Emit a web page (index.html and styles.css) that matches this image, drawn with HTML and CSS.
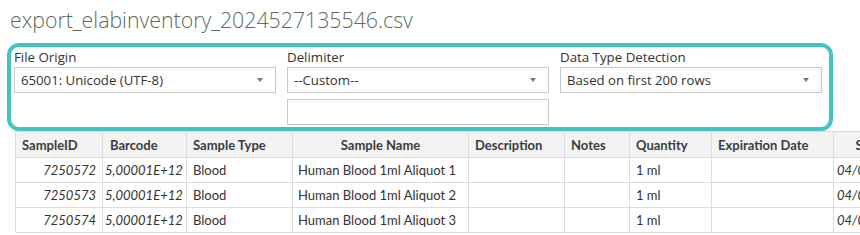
FILE: index.html
```html
<!DOCTYPE html>
<html>
<head>
<meta charset="utf-8">
<link rel="stylesheet" href="styles.css">
</head>
<body>
<div class="page">
  <div class="title">export_elabinventory_2024527135546.csv</div>
  <div class="settings">
    <div class="field">
      <div class="label">File Origin</div>
      <div class="select"><span>65001: Unicode (UTF-8)</span><span class="arrow"></span></div>
    </div>
    <div class="field">
      <div class="label">Delimiter</div>
      <div class="select"><span>--Custom--</span><span class="arrow"></span></div>
      <div class="input"></div>
    </div>
    <div class="field">
      <div class="label">Data Type Detection</div>
      <div class="select"><span>Based on first 200 rows</span><span class="arrow"></span></div>
    </div>
  </div>
  <div class="tablewrap">
    <table class="grid">
      <colgroup>
        <col class="c1"><col class="c2"><col class="c3"><col class="c4"><col class="c5"><col class="c6"><col class="c7"><col class="c8"><col class="c9">
      </colgroup>
      <thead>
        <tr>
          <th class="h-id">SampleID</th>
          <th class="h-bc">Barcode</th>
          <th>Sample Type</th>
          <th class="h-center">Sample Name</th>
          <th>Description</th>
          <th>Notes</th>
          <th>Quantity</th>
          <th>Expiration Date</th>
          <th class="h-center">Storage</th>
        </tr>
      </thead>
      <tbody>
        <tr><td class="num">7250572</td><td class="bc">5,00001E+12</td><td>Blood</td><td class="nm">Human Blood 1ml Aliquot 1</td><td></td><td></td><td>1 ml</td><td></td><td class="dt">04/05/2024</td></tr>
        <tr><td class="num">7250573</td><td class="bc">5,00001E+12</td><td>Blood</td><td class="nm">Human Blood 1ml Aliquot 2</td><td></td><td></td><td>1 ml</td><td></td><td class="dt">04/05/2024</td></tr>
        <tr><td class="num">7250574</td><td class="bc">5,00001E+12</td><td>Blood</td><td class="nm">Human Blood 1ml Aliquot 3</td><td></td><td></td><td>1 ml</td><td></td><td class="dt">04/05/2024</td></tr>
      </tbody>
    </table>
  </div>
  <div class="highlight"></div>
</div>
</body>
</html>
```
FILE: styles.css
```css
html, body {
  margin: 0;
  padding: 0;
  background: #ffffff;
}
.page {
  position: relative;
  width: 860px;
  height: 235px;
  overflow: hidden;
}
.title {
  padding-left: 10px;
  height: 40px;
  line-height: 40px;
  font-family: "Open Sans", sans-serif;
  font-weight: 300;
  font-size: 21.3px;
  color: #5b6b60;
  white-space: nowrap;
}
.settings {
  margin-top: 8px;
  padding-left: 14px;
  display: flex;
  gap: 11px;
}
.field {
  width: 262px;
  display: flex;
  flex-direction: column;
}
.label {
  height: 19px;
  line-height: 19px;
  font-family: "Open Sans", sans-serif;
  font-size: 13.3px;
  color: #333333;
  white-space: nowrap;
}
.select, .input {
  box-sizing: border-box;
  height: 26px;
  border: 1px solid #c8c8c8;
  background: #ffffff;
}
.select {
  display: flex;
  align-items: center;
  justify-content: space-between;
  padding: 0 12px 0 6px;
  font-family: "Open Sans", sans-serif;
  font-size: 13.2px;
  color: #333333;
  white-space: nowrap;
}
.arrow {
  width: 0;
  height: 0;
  border-left: 3px solid transparent;
  border-right: 3px solid transparent;
  border-top: 4px solid #777777;
}
.input {
  margin-top: 6px;
}
.tablewrap {
  margin-top: 6px;
  padding-left: 15px;
}
.grid {
  border-collapse: collapse;
  table-layout: fixed;
  width: 906px;
  font-family: Lato, sans-serif;
  font-size: 13px;
  color: #333333;
}
.c1 { width: 87px; }
.c2 { width: 84px; }
.c3 { width: 106px; }
.c4 { width: 176px; }
.c5 { width: 96px; }
.c6 { width: 65px; }
.c7 { width: 82px; }
.c8 { width: 122px; }
.c9 { width: 88px; }
.grid th, .grid td {
  border: 1px solid #dcdcdc;
  white-space: nowrap;
  overflow: hidden;
  text-align: left;
  padding: 0 6px;
}
.grid th {
  height: 25px;
  background: #f3f3f3;
  font-weight: 700;
  color: #3c3c3c;
}
.grid td {
  height: 24px;
}
.grid th.h-bc { padding-left: 7px; }
.grid th.h-center { text-align: center; }
.grid td.num {
  text-align: right;
  font-style: italic;
  padding-right: 6px;
}
.grid td.bc {
  font-style: italic;
  padding-left: 2px;
}
.grid td.dt {
  font-style: italic;
  padding-left: 3px;
}
.grid td.nm { padding-left: 5px; }
.highlight {
  position: absolute;
  left: 7px;
  top: 43px;
  width: 826px;
  height: 88px;
  box-sizing: border-box;
  border: 4px solid #45c3c3;
  border-radius: 12px;
}
```
